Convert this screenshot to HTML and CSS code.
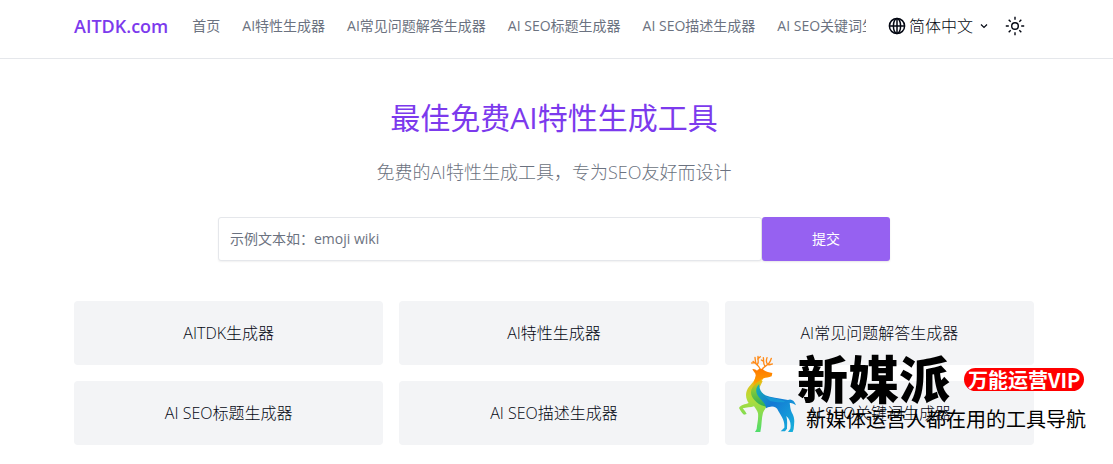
FILE: index.html
```html
<!DOCTYPE html>
<html lang="zh-CN">
<head>
<meta charset="utf-8">
<title>AITDK.com</title>
<link rel="stylesheet" href="styles.css">
</head>
<body>
<header class="header">
  <div class="shell header-row">
    <a class="brand" href="#">AITDK.com</a>
    <nav class="nav">
      <a href="#">首页</a>
      <a href="#">AI特性生成器</a>
      <a href="#">AI常见问题解答生成器</a>
      <a href="#">AI SEO标题生成器</a>
      <a href="#">AI SEO描述生成器</a>
      <a href="#">AI SEO关键词生成器</a>
    </nav>
    <div class="tools">
      <button class="lang" type="button">
        <svg width="18" height="18" viewBox="0 0 18 18" fill="none" stroke="currentColor" stroke-width="1.5"><circle cx="9" cy="9" r="7.6"/><ellipse cx="9" cy="9" rx="3.6" ry="7.6"/><path d="M1.4 9h15.2M9 1.4v15.2"/></svg>
        <span>简体中文</span>
        <svg class="chevron" width="8" height="8" viewBox="0 0 8 8" fill="none" stroke="currentColor" stroke-width="1.2"><path d="M1 2.5 4 5.5 7 2.5"/></svg>
      </button>
      <button class="theme" type="button" aria-label="切换主题">
        <svg width="20" height="20" viewBox="0 0 20 20" fill="none" stroke="currentColor" stroke-width="1.4"><circle cx="10" cy="10" r="3.3"/><path d="M10 .8v3M10 16.2v3M.8 10h3M16.2 10h3M3.7 3.7l2 2M14.3 14.3l2 2M3.7 16.3l2-2M14.3 5.7l2-2"/></svg>
      </button>
    </div>
  </div>
</header>
<main class="shell main">
  <h1 class="title">最佳免费AI特性生成工具</h1>
  <p class="subtitle">免费的AI特性生成工具，专为SEO友好而设计</p>
  <form class="form">
    <input class="field" type="text" aria-label="示例文本" placeholder="示例文本如：emoji wiki">
    <button class="submit" type="button">提交</button>
  </form>
  <div class="cards">
    <a class="card" href="#">AITDK生成器</a>
    <a class="card" href="#">AI特性生成器</a>
    <a class="card" href="#">AI常见问题解答生成器</a>
    <a class="card" href="#">AI SEO标题生成器</a>
    <a class="card" href="#">AI SEO描述生成器</a>
    <a class="card" href="#">AI SEO关键词生成器</a>
  </div>
</main>
<aside class="promo">
  <svg class="deer" width="60" height="80" viewBox="21 30 180 240">
    <defs>
      <linearGradient id="head" x1="0" y1="0" x2="0" y2="1"><stop offset="0" stop-color="#ff7a00"/><stop offset=".6" stop-color="#ff9800"/><stop offset="1" stop-color="#f6c515"/></linearGradient>
      <linearGradient id="chest" x1="0" y1="0" x2="0" y2="1"><stop offset="0" stop-color="#f5b515"/><stop offset=".35" stop-color="#b9dc37"/><stop offset="1" stop-color="#4fdc6c"/></linearGradient>
      <linearGradient id="sash" x1="0" y1="0" x2="0" y2="1"><stop offset="0" stop-color="#ffb600"/><stop offset=".45" stop-color="#7fca3c"/><stop offset="1" stop-color="#27ad5b"/></linearGradient>
      <linearGradient id="back" x1="0" y1="0" x2="1" y2="1"><stop offset="0" stop-color="#13b5b0"/><stop offset=".4" stop-color="#1478d4"/><stop offset="1" stop-color="#16b4dc"/></linearGradient>
    </defs>
    <g fill="none" stroke="#ff8a17" stroke-width="4" stroke-linecap="round">
      <path d="M91 76C88 65 79 61 69 52M79 60C75 52 76 46 75 40M82 62C88 54 83 45 84 37M74 56 65 57M83 45 91 38"/>
      <path d="M97 77C99 66 117 65 121 51M105 67C98 58 102 49 100 41M114 62C106 55 109 47 111 41M114 62C121 63 124 61 127 60M101 52 94 48M121 51 124 43"/>
    </g>
    <path fill="url(#chest)" d="M77 101C69 119 52 128 49 145C46 160 51 169 56 177C45 182 33 181 27 192C31 199 35 207 42 212L50 210C46 202 41 197 38 193C49 190 62 191 72 187C76 193 82 199 84 208C86 224 81 241 80 255L75 264H91C96 242 94 223 99 206C105 193 114 190 105 176L84 140L98 111Z"/>
    <path fill="url(#head)" d="M67 75C72 74 78 77 81 80C87 73 96 73 102 79C109 83 117 86 127 87L125 97C116 101 108 101 101 103C91 110 77 122 65 136C72 117 74 105 77 95C78 87 70 83 67 75Z"/>
    <path fill="url(#sash)" d="M101 103C83 120 80 144 96 160C105 171 117 180 121 188C105 189 86 184 74 169C57 151 61 132 77 119C85 112 92 108 101 103Z"/>
    <path fill="url(#back)" d="M88 120C86 138 98 154 120 158C141 162 157 164 174 168C183 163 194 170 198 184C188 179 184 176 179 178C181 187 180 192 185 205C197 224 192 239 191 255L188 264H174L181 254C184 238 179 225 169 216C173 230 171 244 171 254L165 262H152L163 251C165 230 154 216 145 201C138 184 121 186 108 193C108 177 88 166 81 151C76 139 79 128 88 120Z"/>
    <path fill="#18a8d8" opacity=".65" d="M105 157C128 163 149 164 167 174C152 176 134 175 120 171Z"/>
  </svg>
  <div class="promo-text">
    <div class="promo-head">
      <strong class="promo-name">新媒派</strong>
      <span class="pill">万能运营VIP</span>
    </div>
    <p class="promo-line">新媒体运营人都在用的工具导航</p>
  </div>
</aside>
</body>
</html>
```
FILE: styles.css
```css
* { box-sizing: border-box; }
body {
  margin: 0;
  background: #fff;
  color: #030712;
  font-family: "Open Sans", "Noto Sans CJK SC", sans-serif;
  font-size: 16px;
  line-height: 24px;
}
a { color: inherit; text-decoration: none; }
button, input { font: inherit; color: inherit; }
button { border: 0; background: none; padding: 0; }
.shell { padding: 0 79px 0 74px; }
.header { border-bottom: 1px solid #e5e7eb; }
.header-row { display: flex; align-items: center; height: 58px; padding-bottom: 6px; }
.brand { color: #7c3aed; font-size: 18px; font-weight: 600; margin-right: 24px; }
.nav {
  display: flex;
  flex: 1;
  min-width: 0;
  gap: 22px;
  overflow: hidden;
  white-space: nowrap;
  color: #6b7280;
  font-size: 14px;
}
.tools { display: flex; align-items: center; gap: 17px; margin-left: 22px; padding-right: 9px; }
.lang { display: flex; align-items: center; gap: 3px; font-weight: 300; }
.chevron { margin-left: 4px; }
.theme { display: flex; }
.main { padding-top: 39px; }
.title {
  margin: 0;
  color: #7c3aed;
  font-size: 30px;
  line-height: 40px;
  font-weight: 400;
  text-align: center;
}
.subtitle {
  margin: 20px 0 0;
  color: #6b7280;
  font-size: 18px;
  line-height: 28px;
  font-weight: 300;
  text-align: center;
}
.form { display: flex; max-width: 672px; margin: 31px auto 0; }
.field {
  flex: 1;
  min-width: 0;
  height: 44px;
  padding: 0 11px 2px;
  border: 1px solid #e5e7eb;
  border-radius: 3px;
  box-shadow: 0 1px 2px rgba(0, 0, 0, .06);
  font-size: 14px;
}
.field::placeholder { color: #6b7280; opacity: 1; }
.submit {
  width: 128px;
  border-radius: 3px;
  background: #9661f1;
  box-shadow: 0 1px 2px rgba(0, 0, 0, .1);
  color: #fff;
  font-size: 14px;
}
.cards { display: grid; grid-template-columns: repeat(3, 1fr); gap: 16px; margin-top: 40px; padding-bottom: 19px; }
.card {
  display: flex;
  align-items: center;
  justify-content: center;
  height: 64px;
  border-radius: 4px;
  background: #f3f4f6;
  font-weight: 300;
}
.promo {
  position: absolute;
  top: 354px;
  right: 27px;
  display: flex;
  color: #000;
  font-family: "Noto Sans CJK SC", sans-serif;
}
.promo-head { display: flex; align-items: center; gap: 14px; height: 50px; }
.promo-name { font-size: 51px; line-height: 46px; font-weight: 900; padding-bottom: 4px; }
.pill {
  padding: 0 4px;
  border-radius: 12px;
  background: #f00;
  color: #fff;
  font-size: 20px;
  line-height: 23px;
  font-weight: 700;
}
.promo-line { margin: 3px 0 0 9px; font-size: 20px; line-height: 24px; }
```
